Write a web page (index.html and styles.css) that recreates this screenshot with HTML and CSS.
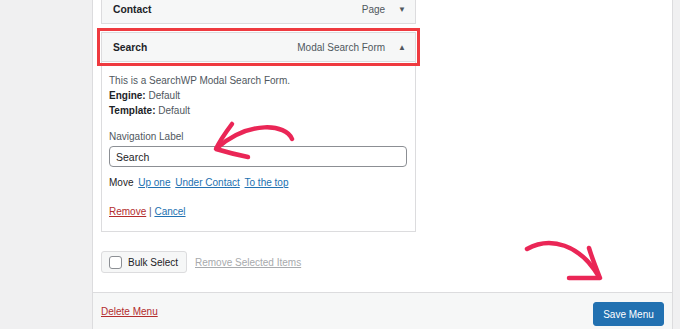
FILE: index.html
```html
<!DOCTYPE html>
<html lang="en">
<head>
    <meta charset="UTF-8">
    <meta name="viewport" content="width=device-width, initial-scale=1.0">
    <title>Menus - Search</title>
    <link rel="stylesheet" href="styles.css">
</head>
<body>
    <div class="panel">
        <div class="menu-items">
            <div class="menu-item">
                <div class="item-bar">
                    <span class="item-title">Contact</span>
                    <span class="item-type">Page</span>
                    <span class="item-toggle">&#9660;</span>
                </div>
            </div>
            <div class="menu-item open">
                <div class="item-bar highlighted">
                    <span class="item-title">Search</span>
                    <span class="item-type">Modal Search Form</span>
                    <span class="item-toggle">&#9650;</span>
                </div>
                <div class="item-settings">
                    <p class="desc">This is a SearchWP Modal Search Form.</p>
                    <p><b>Engine:</b> Default</p>
                    <p><b>Template:</b> Default</p>
                    <label class="field-label">Navigation Label</label>
                    <input class="field-input" type="text" value="Search">
                    <p class="move">Move <a href="#">Up one</a> <a href="#">Under Contact</a> <a href="#">To the top</a></p>
                    <p class="actions"><a href="#" class="danger">Remove</a> | <a href="#">Cancel</a></p>
                </div>
            </div>
        </div>
        <div class="bulk-row">
            <label class="bulk-button"><span class="checkbox"></span>Bulk Select</label>
            <a href="#" class="muted-link">Remove Selected Items</a>
        </div>
        <div class="spacer"></div>
        <div class="footer">
            <a href="#" class="danger">Delete Menu</a>
            <button class="save-button">Save Menu</button>
        </div>
    </div>

    <!-- hand drawn annotations -->
    <svg class="annotations" width="680" height="329" viewBox="0 0 680 329">
        <g fill="none" stroke="#ea2656" stroke-width="4.5" stroke-linecap="round" stroke-linejoin="round">
            <path d="M292 139 C 286 124, 250 120, 217 148"/>
            <path d="M232 124 C 226 132, 220 140, 216 149 C 226 152, 238 155, 248 157"/>
            <path d="M527 249 C 550 236, 580 244, 599 277"/>
            <path d="M589 248 C 592 258, 596 268, 600 278 C 590 278, 580 278, 569 278"/>
        </g>
    </svg>
</body>
</html>
```

FILE: styles.css
```css
body {
    margin: 0;
    height: 329px;
    overflow: hidden;
    background-color: #f0f0f1;
    font-family: "Liberation Sans", Arial, sans-serif;
    font-size: 10px;
    color: #1d2327;
}
a {
    color: #2271b1;
}
p {
    margin: 0;
    line-height: 15px;
}
.panel {
    margin-left: 92px;
    width: 579px;
    height: 329px;
    background-color: white;
    border-left: 1px solid #dcdcde;
    border-right: 1px solid #dcdcde;
    display: flex;
    flex-direction: column;
}
.menu-items {
    margin-top: -6px;
    padding-left: 8px;
    display: flex;
    flex-direction: column;
    gap: 8px;
}
.menu-item {
    width: 315px;
}
.item-bar {
    height: 28px;
    display: flex;
    align-items: center;
    padding: 0 9px 0 11px;
    background-color: #f6f7f7;
    border: 1px solid #dcdcde;
}
.item-bar.highlighted {
    outline: 3px solid #ef3a3f;
    outline-offset: 1px;
}
.item-title {
    font-weight: bold;
    font-size: 10.3px;
    flex: 1;
}
.item-type {
    color: #50575e;
    margin-right: 13px;
}
.item-toggle {
    font-size: 8px;
    color: #50575e;
}
.item-settings {
    border: 1px solid #dcdcde;
    border-top: none;
    padding: 11px 7px 12px 7px;
    display: flex;
    flex-direction: column;
    color: #50575e;
}
.item-settings b {
    color: #1d2327;
}
.field-label {
    margin-top: 11px;
    line-height: 15px;
}
.field-input {
    margin-top: 2px;
    width: 298px;
    height: 21px;
    box-sizing: border-box;
    border: 1px solid #8c8f94;
    border-radius: 4px;
    padding: 0 6px;
    font-family: inherit;
    font-size: 10.5px;
    color: #1d2327;
}
.move {
    margin-top: 8px;
    color: #1d2327;
}
.move a {
    margin-left: 2px;
}
.actions {
    margin-top: 14px;
}
.danger {
    color: #b32d2e;
}
.bulk-row {
    margin-top: 19px;
    padding-left: 8px;
    display: flex;
    align-items: center;
    gap: 8px;
}
.bulk-button {
    height: 20px;
    width: 77px;
    display: flex;
    align-items: center;
    gap: 6px;
    padding-left: 7px;
    border: 1px solid #dcdcde;
    border-radius: 3px;
    background-color: #f6f7f7;
    color: #1d2327;
}
.checkbox {
    width: 11px;
    height: 11px;
    border: 1px solid #8c8f94;
    border-radius: 3px;
    background-color: white;
}
.muted-link {
    color: #a7aaad;
}
.spacer {
    flex: 1;
}
.footer {
    height: 36px;
    border-top: 1px solid #dcdcde;
    background-color: #f6f7f7;
    display: flex;
    align-items: center;
    justify-content: space-between;
    padding: 0 8px;
}
.save-button {
    margin-top: 6px;
    height: 24px;
    width: 71px;
    border: 1px solid #2271b1;
    border-radius: 3px;
    background-color: #2271b1;
    color: white;
    font-family: inherit;
    font-size: 10px;
}
.annotations {
    position: absolute;
    top: 0;
    left: 0;
    pointer-events: none;
}
```
